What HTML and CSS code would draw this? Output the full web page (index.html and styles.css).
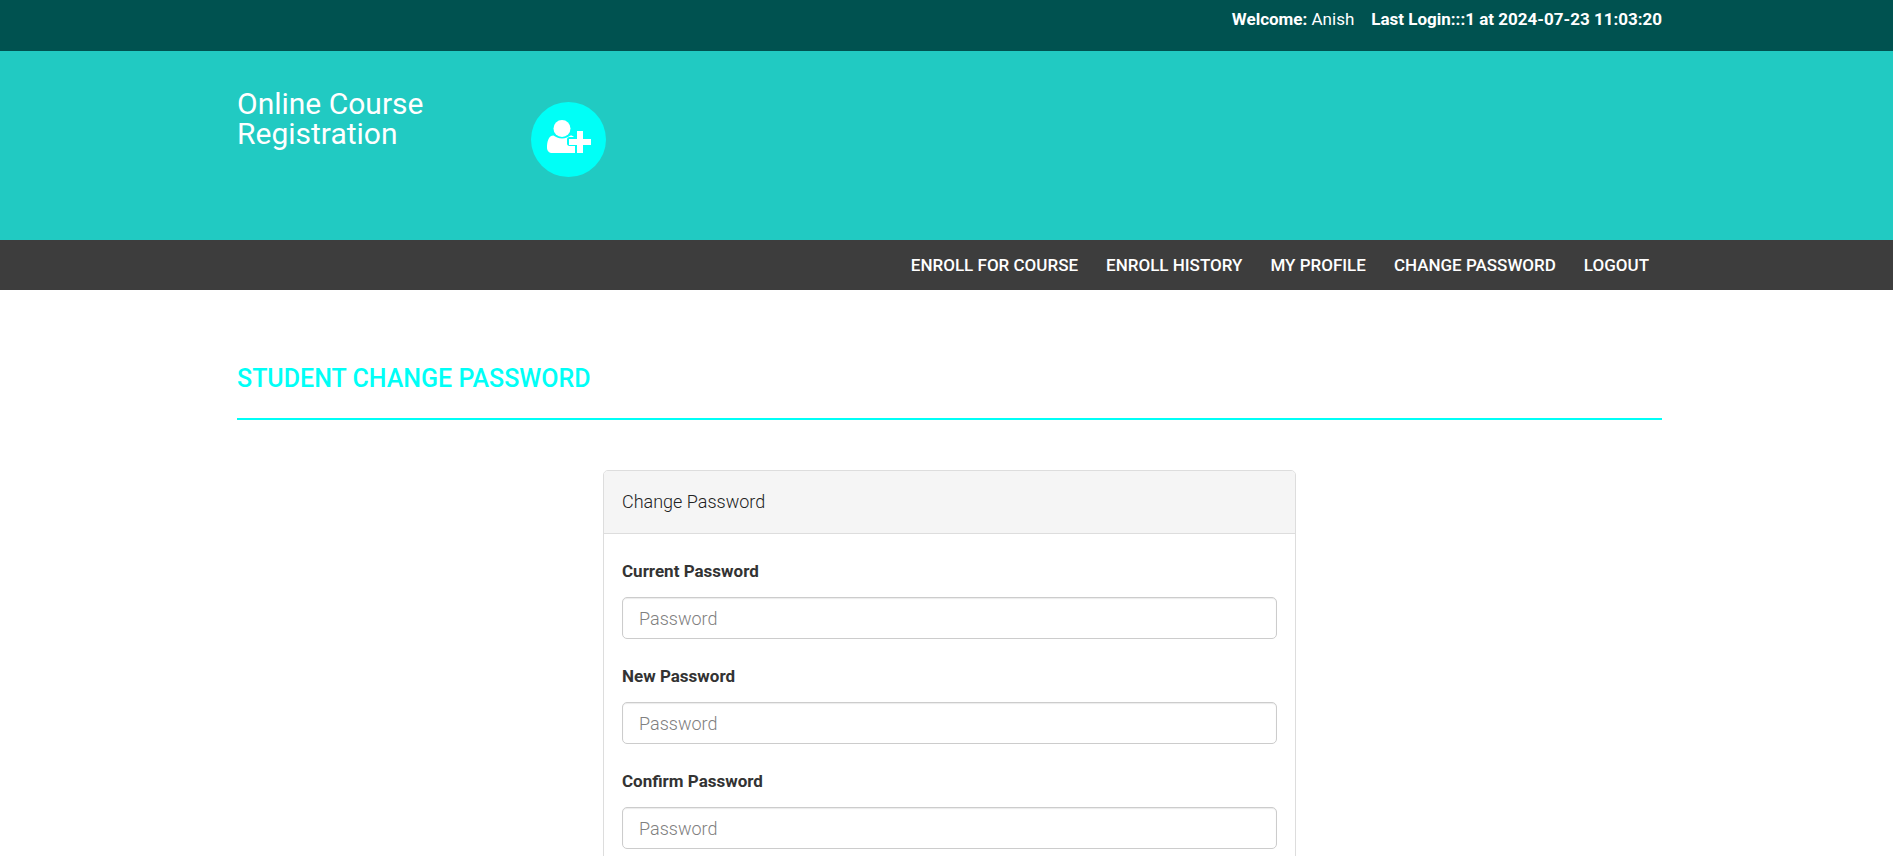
FILE: index.html
```html
<!DOCTYPE html>
<html lang="en">
<head>
<meta charset="utf-8">
<title>Student Change Password</title>
<link rel="stylesheet" href="styles.css">
</head>
<body>
<header class="topbar">
  <div class="container login-info">
    <span><strong>Welcome:</strong> Anish</span>
    <strong>Last Login:::1 at 2024-07-23 11:03:20</strong>
  </div>
</header>
<div class="brandbar">
  <div class="container brand-row">
    <a class="brand" href="#">Online Course<br>Registration</a>
    <span class="badge">
      <svg class="badge-icon" viewBox="0 0 44 33" aria-hidden="true">
        <path fill="#fff" d="M15 0a8.500 8.500 0 1 1 0 17a8.500 8.500 0 0 1 0-17z"/>
        <path fill="#fff" d="M6.500 15.500C8.500 17 11.500 18.400 15 18.400s6.500-1.400 8.500-2.900c1.600 0 2.600.6 3.500 1.600h-4.500c-1.600 0-2.500.9-2.500 2.400v4c0 1.600.9 2.500 2.500 2.500H28v7H5.500C2 33 0 31 0 27.500c0-5.500 1.500-12 6.500-12z"/>
        <path fill="#fff" d="M30 11h6v8h8v6h-8v8h-6v-8h-8v-6h8z"/>
      </svg>
    </span>
  </div>
</div>
<nav class="menubar">
  <div class="container menu">
    <a href="#">ENROLL FOR COURSE</a>
    <a href="#">ENROLL HISTORY</a>
    <a href="#">MY PROFILE</a>
    <a href="#">CHANGE PASSWORD</a>
    <a href="#">LOGOUT</a>
  </div>
</nav>
<main class="content">
  <div class="container">
    <h1 class="page-title">STUDENT CHANGE PASSWORD</h1>
    <section class="panel">
      <h2 class="panel-heading">Change Password</h2>
      <form class="panel-body">
        <div class="field">
          <label for="current">Current Password</label>
          <input id="current" type="password" placeholder="Password">
        </div>
        <div class="field">
          <label for="new">New Password</label>
          <input id="new" type="password" placeholder="Password">
        </div>
        <div class="field">
          <label for="confirm">Confirm Password</label>
          <input id="confirm" type="password" placeholder="Password">
        </div>
      </form>
    </section>
  </div>
</main>
</body>
</html>
```

FILE: styles.css
```css
* {
  box-sizing: border-box;
}

body {
  margin: 0;
  height: 100vh;
  display: flex;
  flex-direction: column;
  background: #fff;
  color: #333;
  font-family: Roboto, "Open Sans", sans-serif;
  font-size: 18px;
  font-weight: 300;
  line-height: 25px;
}

a {
  color: inherit;
  text-decoration: none;
}

.container {
  width: 100%;
  max-width: 1431px;
  margin: 0 auto;
  padding-left: 6px;
}

.topbar {
  background: #005250;
  color: #fff;
  padding: 7px 0 19px;
}

.login-info {
  display: flex;
  justify-content: flex-end;
  gap: 17px;
  font-size: 17px;
  font-weight: 400;
}

strong,
label {
  font-size: 17px;
  font-weight: 700;
}

.brandbar {
  background: #21cac2;
  color: #fff;
  padding: 38px 0 63px;
}

.brand-row {
  display: grid;
  grid-template-columns: 294px auto;
  justify-content: start;
}

.brand {
  font-size: 30px;
  font-weight: 400;
  line-height: 30px;
}

.badge {
  width: 75px;
  height: 75px;
  margin-top: 13px;
  padding: 18px 15px 24px 16px;
  border-radius: 50%;
  background: #00fff7;
}

.badge-icon {
  display: block;
  width: 44px;
  height: 33px;
}

.menubar {
  background: #3d3d3d;
  color: #fff;
  padding: 13px 0 12px;
}

.menu {
  display: flex;
  justify-content: flex-end;
  gap: 28px;
  padding-right: 13px;
  font-size: 17px;
  font-weight: 500;
}

.content {
  flex: 1;
  min-height: 0;
  overflow: hidden;
  padding-top: 76px;
}

.page-title {
  margin: 0 0 50px;
  padding-bottom: 26px;
  border-bottom: 2px solid #00fff7;
  color: #00fff7;
  font-size: 25px;
  font-weight: 500;
  line-height: 26px;
}

.panel {
  width: 693px;
  max-width: 100%;
  margin: 0 auto;
  border: 1px solid #ddd;
  border-radius: 5px;
}

.panel-heading {
  margin: 0;
  padding: 18px 18px 19px;
  border-bottom: 1px solid #ddd;
  border-radius: 4px 4px 0 0;
  background: #f5f5f5;
  color: #222;
  font-size: 18px;
  font-weight: 300;
  line-height: 25px;
}

.panel-body {
  display: grid;
  gap: 25px;
  padding: 25px 18px;
}

.field {
  display: grid;
  gap: 13px;
}

.field input {
  width: 100%;
  height: 42px;
  padding: 7px 16px;
  border: 1px solid #ccc;
  border-radius: 5px;
  background: #fff;
  box-shadow: inset 0 1px 1px rgba(0, 0, 0, 0.08);
  color: #555;
  font: inherit;
}

.field input::placeholder {
  color: #808080;
}
```
